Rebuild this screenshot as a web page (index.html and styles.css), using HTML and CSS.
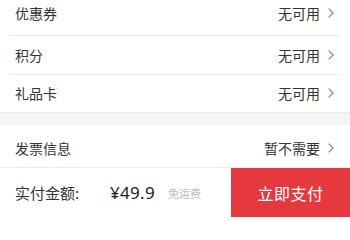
FILE: index.html
```html
<!DOCTYPE html>
<html lang="zh-CN">
<head>
<meta charset="utf-8">
<link rel="stylesheet" href="styles.css">
</head>
<body>
<div class="page">
  <ul class="list">
    <li class="row first"><span class="label">优惠券</span><span class="value">无可用<svg class="arrow" viewBox="0 0 6 10"><path d="M0.6 0.6 L5.2 5 L0.6 9.4" /></svg></span></li>
    <li class="row"><span class="label">积分</span><span class="value">无可用<svg class="arrow" viewBox="0 0 6 10"><path d="M0.6 0.6 L5.2 5 L0.6 9.4" /></svg></span></li>
    <li class="row last"><span class="label">礼品卡</span><span class="value">无可用<svg class="arrow" viewBox="0 0 6 10"><path d="M0.6 0.6 L5.2 5 L0.6 9.4" /></svg></span></li>
  </ul>
  <div class="gap"></div>
  <div class="row invoice"><span class="label">发票信息</span><span class="value">暂不需要<svg class="arrow" viewBox="0 0 6 10"><path d="M0.6 0.6 L5.2 5 L0.6 9.4" /></svg></span></div>
  <div class="footer">
    <div class="total">
      <span class="total-label">实付金额:</span>
      <span class="price">¥49.9</span>
      <span class="ship">免运费</span>
    </div>
    <button class="pay">立即支付</button>
  </div>
</div>
</body>
</html>
```

FILE: styles.css
```css
* { box-sizing: border-box; }
html, body { margin: 0; padding: 0; background: #fff; }
body {
  font-family: "Noto Sans CJK SC", "Noto Sans", sans-serif;
  color: #333;
  width: 350px;
  height: 218px;
  overflow: hidden;
}
.page { display: flex; flex-direction: column; }
.list { list-style: none; margin: 0; padding: 0; }
.row {
  display: flex;
  align-items: center;
  justify-content: space-between;
  height: 39px;
  padding: 0 15px;
  font-size: 14px;
  position: relative;
}
.list .row { border-bottom: 1px solid transparent; }
.list .row::after {
  content: "";
  position: absolute;
  left: 10px;
  right: 10px;
  bottom: -1px;
  height: 1px;
  background: #ebebeb;
}
.list .row.first { height: 36px; padding-bottom: 9px; }
.list .row.last { height: 37px; }
.list .row.last::after { display: none; }
.label { line-height: 1; }
.value { display: flex; align-items: center; line-height: 1; }
.arrow {
  width: 6px;
  height: 10px;
  margin-left: 8px;
  margin-right: 1px;
  fill: none;
  stroke: #808080;
  stroke-width: 1.1;
}
.gap { height: 13px; background: #f4f4f4; border-top: 1px solid #ececec; }
.invoice { height: 43px; padding-top: 3px; border-bottom: 1px solid #ececec; }
.footer {
  display: flex;
  height: 49px;
}
.total {
  flex: 1;
  display: flex;
  align-items: center;
  padding-left: 15px;
}
.total-label { font-size: 15px; color: #333; width: 95px; }
.price { font-size: 17px; color: #222; font-family: "Noto Sans", sans-serif; letter-spacing: 0.3px; }
.ship { font-size: 11px; color: #bbb; margin-left: 13px; }
.pay {
  width: 119px;
  border: 0;
  margin: 0;
  background: #e5393f;
  color: #fff;
  font-family: "Noto Sans CJK SC", sans-serif;
  font-size: 16px;
  letter-spacing: 0.5px;
}
```
